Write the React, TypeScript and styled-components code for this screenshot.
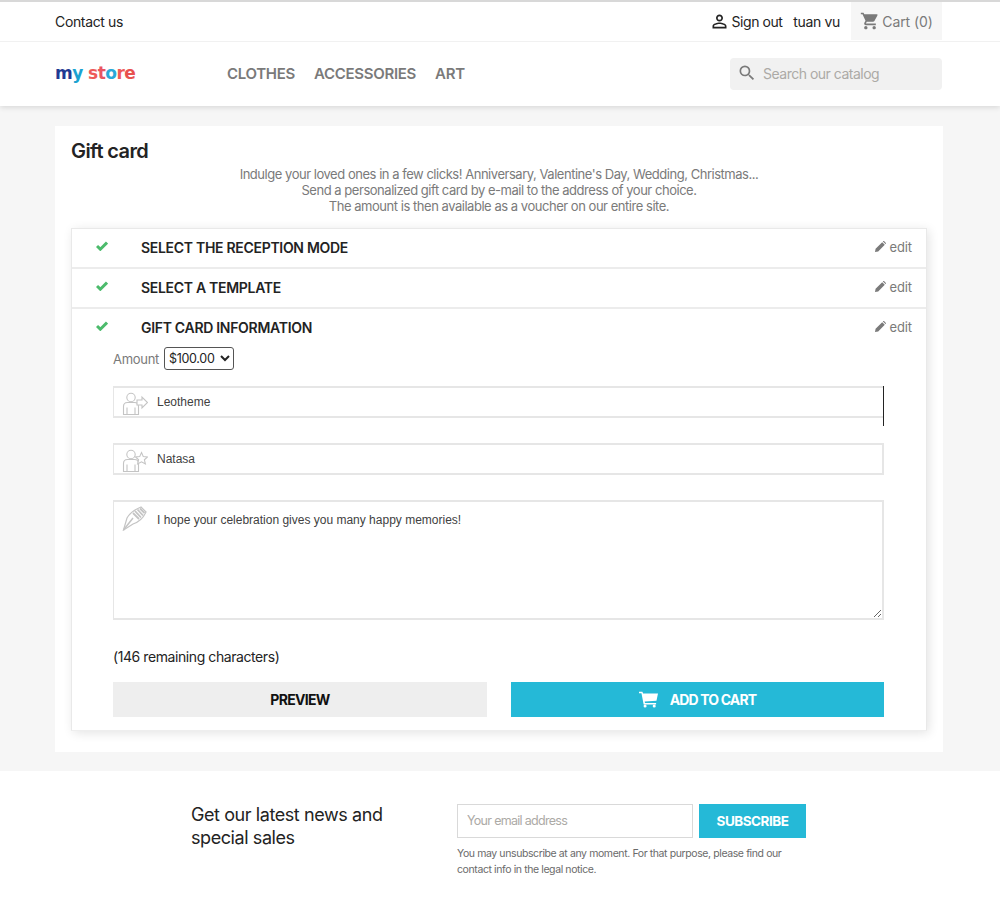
import React from "react";
import styled, { createGlobalStyle } from "styled-components";

const Global = createGlobalStyle`
  html, body { margin: 0; padding: 0; background: #fff; }
  * { box-sizing: border-box; }
  body { font-family: Inter, "Liberation Sans", sans-serif; color: #232323; }
`;
const Page = styled.div`width: 1000px; height: 900px; overflow: hidden; display: flex; flex-direction: column;`;
const Header = styled.header`
  height: 106px; background: #fff; border-top: 2px solid #d8d8d8;
  box-shadow: 0 2px 5px rgba(0,0,0,.11); position: relative; z-index: 1; flex: none;
`;
const TopBar = styled.div`
  height: 40px; border-bottom: 1px solid #f1f1f1; padding: 0 58px 0 55px;
  display: flex; align-items: center; justify-content: space-between;
`;
const TopLink = styled.span`font-size: 14px; letter-spacing: -.35px; color: #232323;`;
const TopRight = styled.div`display: flex; align-items: center; height: 100%;`;
const SignOut = styled(TopLink)`display: flex; align-items: center; gap: 2px; margin-right: 11px; letter-spacing: -.45px;`;
const Cart = styled.div`
  width: 91px; height: 38px; margin-left: 11px; background: #f6f6f6; color: #7a7a7a; font-size: 14px;
  display: flex; align-items: center; justify-content: center; gap: 2px; margin-bottom: 1px;
  letter-spacing: -.1px;
`;
const MainBar = styled.div`
  height: 64px; padding: 0 58px 2px 55px; display: flex; align-items: center;
`;
const Logo = styled.div`
  width: 172px; font: 800 17px "DejaVu Sans", sans-serif; letter-spacing: -.55px; line-height: 1; white-space: pre;
`;
const Ch = styled.span<{ $c: string }>`color: ${p => p.$c};`;
const Menu = styled.nav`display: flex; gap: 19px;`;
const MenuItem = styled.span`font-size: 15px; font-weight: 600; color: #7a7a7a; letter-spacing: -.3px;`;
const Search = styled.div`
  margin-left: auto; width: 212px; height: 32px; background: #f1f1f1; border-radius: 4px; margin-bottom: -2px;
  display: flex; align-items: center; gap: 6px; padding: 0 0 2px 7px; color: #acaaa6; font-size: 14px; letter-spacing: -.5px;
`;
const Main = styled.main`
  height: 665px; flex: none; background: #f6f6f6; padding: 20px 57px 0 55px;
`;
const Card = styled.section`
  background: #fff; height: 626px; padding: 14px 16px 0;
`;
const Title = styled.h1`
  font-size: 20px; line-height: 22px; font-weight: 600; margin: 0; color: #232323; letter-spacing: -.6px;
`;
const Intro = styled.p`
  margin: 4px 0 14px; text-align: center; font-size: 13px; line-height: 16px; color: #7a7a7a; letter-spacing: -.47px;
`;
const Steps = styled.div`box-shadow: 2px 2px 10px rgba(0,0,0,.11); border: 1px solid #e9e9e9; border-bottom-color: #eee;`;
const Step = styled.div`
  height: 38px; display: flex; align-items: center; padding: 0 14px 2px 24px; background: #fff;
  & + & { border-top: 2px solid #ececec; height: 40px; }
`;
const CheckBox = styled.span`width: 45px; display: flex; color: #4cbb6c; margin-top: -3px;`;
const StepTitle = styled.h2`
  margin: 0; font-size: 14px; font-weight: 600; color: #232323; letter-spacing: -.3px; flex: 1;
`;
const Edit = styled.span`
  display: flex; align-items: center; gap: 3px; color: #7a7a7a; font-size: 13px; letter-spacing: -.1px;
  svg { margin-top: -2px; }
`;
const Form = styled.div`padding: 0 42px 13px 41px; height: 383px;`;
const AmountRow = styled.div`
  display: flex; align-items: center; gap: 5px; height: 23px; margin-bottom: -1px; font-size: 13px; color: #7a7a7a; letter-spacing: -.3px;
`;
const Select = styled.select`
  width: 70px; height: 23px; border: 1px solid #555; border-radius: 3px; background: #fff;
  font: 12.5px Inter, sans-serif; letter-spacing: -.3px; color: #232323; padding: 0;
`;
const FieldRow = styled.div<{ $dark?: boolean }>`
  height: 40px; position: relative; margin-top: 17px;
  ${p => p.$dark ? "border-right: 1px solid #232323;" : ""}
`;
const FieldIcon = styled.span`position: absolute; left: 9px; top: 5px; display: flex; pointer-events: none;`;
const TextInput = styled.input`
  display: block; width: 100%; height: 32px; padding: 0 0 0 43px; background: #fff; outline: none;
  border: 2px solid #e6e6e6; border-width: 2px 2px 2px 1px;
  font: 12px "Liberation Sans", Arial, sans-serif; color: #414141;
`;
const OpenInput = styled(TextInput)`border-right: 0;`;
const AreaRow = styled.div`position: relative; height: 120px; margin-top: 17px;`;
const TextArea = styled.textarea`
  display: block; width: 100%; height: 120px; padding: 11px 0 0 43px; background: #fff; outline: none; resize: both;
  border: 2px solid #e6e6e6; border-width: 2px 2px 2px 1px;
  font: 12px "Liberation Sans", Arial, sans-serif; color: #414141;
`;
const Remaining = styled.div`
  margin-top: 27px; height: 20px; font-size: 14px; line-height: 20px; color: #232323; letter-spacing: -.42px; padding-left: 0;
`;
const Buttons = styled.div`display: grid; grid-template-columns: 374px 373px; column-gap: 24px; margin-top: 15px;`;
const Button = styled.button<{ $primary?: boolean }>`
  height: 35px; border: 0; padding: 0; display: flex; align-items: center; justify-content: center; gap: 12px;
  font: 700 14px Inter, sans-serif; letter-spacing: ${p => p.$primary ? "-.85px" : "-.7px"};
  background: ${p => p.$primary ? "#25b9d7" : "#eeeeee"};
  color: ${p => p.$primary ? "#fff" : "#111"};
`;
const Footer = styled.footer`
  flex: 1; background: #fff; padding: 33px 0 0 191px; display: flex;
`;
const Pitch = styled.div`
  width: 266px; font-size: 18px; line-height: 23px; color: #232323; letter-spacing: -.42px; margin-top: -1px;
`;
const Signup = styled.div`width: 350px;`;
const SignupRow = styled.div`display: flex; gap: 6px;`;
const Email = styled.input`
  width: 236px; height: 34px; border: 1px solid #d9d9d9; padding: 0 9px 2px; outline: none;
  font: 12.5px Inter, sans-serif; letter-spacing: -.7px;
  &::placeholder { color: #acaaa6; opacity: 1; }
`;
const Subscribe = styled.button`
  width: 107px; height: 34px; border: 0; background: #25b9d7; color: #fff; padding: 0 0 1px;
  font: 700 13.5px Inter, sans-serif; letter-spacing: -.5px;
`;
const Note = styled.p`
  margin: 8px 0 0; font-size: 10.5px; line-height: 16px; color: #6a6a6a; letter-spacing: -.4px; width: 345px;
`;

const Check = () => (
  <svg width="12" height="10" viewBox="0 0 12 10"><path d="M1 5 L4.3 8.2 L11 1.6" fill="none" stroke="currentColor" strokeWidth="3" /></svg>
);
const Pencil = () => (
  <svg width="11" height="11" viewBox="0 0 11 11" fill="currentColor"><path d="M0 11 L.6 7.8 L7.2 1.2 L9.8 3.8 L3.2 10.4 Z M7.9.5 L8.3.1 Q8.6-.1 9 .1 L10.9 2 Q11.1 2.4 10.9 2.7 L10.5 3.1 Z" /></svg>
);
const PersonOutline = () => (
  <svg width="21" height="21" viewBox="0 0 24 24" fill="#232323"><path d="M12 5.9a2.1 2.1 0 1 1 0 4.2 2.1 2.1 0 0 1 0-4.2m0 9c2.97 0 6.1 1.46 6.1 2.1v1.1H5.9V17c0-.64 3.13-2.1 6.1-2.1M12 4C9.79 4 8 5.79 8 8s1.79 4 4 4 4-1.79 4-4-1.79-4-4-4zm0 9c-2.67 0-8 1.34-8 4v3h16v-3c0-2.66-5.33-4-8-4z" /></svg>
);
const CartIcon = () => (
  <svg width="20" height="20" viewBox="0 0 24 24" fill="#7a7a7a"><path d="M7 18c-1.1 0-1.99.9-1.99 2S5.9 22 7 22s2-.9 2-2-.9-2-2-2zM1 2v2h2l3.6 7.59-1.35 2.45c-.16.28-.25.61-.25.96 0 1.1.9 2 2 2h12v-2H7.42c-.14 0-.25-.11-.25-.25l.03-.12.9-1.63h7.45c.75 0 1.41-.41 1.75-1.03l3.58-6.49A1 1 0 0 0 20.01 4H5.21l-.94-2H1zm16 16c-1.1 0-1.99.9-1.99 2s.89 2 1.99 2 2-.9 2-2-.9-2-2-2z" /></svg>
);
const SearchIcon = () => (
  <svg width="20" height="20" viewBox="0 0 24 24" fill="#7a7a7a"><path d="M15.5 14h-.79l-.28-.27A6.47 6.47 0 0 0 16 9.5 6.5 6.5 0 1 0 9.5 16c1.61 0 3.09-.59 4.23-1.57l.27.28v.79l5 4.99L20.49 19l-4.99-5zm-6 0C7.01 14 5 11.99 5 9.5S7.01 5 9.5 5 14 7.01 14 9.5 11.99 14 9.5 14z" /></svg>
);
const SolidCart = () => (
  <svg width="19" height="17" viewBox="0 0 20 17" fill="#fff"><path d="M0 .3h3.6l.7 2H20l-1.6 7.4-12.4 1 .3 1.4H18v1.6H4.9L2.6 2H0z" /><circle cx="6.4" cy="15.3" r="1.6" /><circle cx="16" cy="15.3" r="1.6" /></svg>
);
const Person = ({ children }: { children: React.ReactNode }) => (
  <svg width="26" height="25" viewBox="0 0 26 25" fill="none" stroke="#c4c4c4" strokeWidth="1.1">
    <circle cx="9" cy="6.5" r="4.2" />
    <path d="M1.5 23.5 V15.5 Q1.5 11.5 5.5 11.5 H12.5 Q16.5 11.5 16.5 15.5 V23.5 Z M5 23.5 V16.5 M13 23.5 V16.5" />
    {children}
  </svg>
);
const SendIcon = () => <Person><path d="M15 9 H20 V6 L25.5 11.5 L20 17 V14 H15 Z" fill="#fff" /></Person>;
const StarIcon = () => <Person><path d="M19.5 4.5 L21.3 8.6 L25.5 8.9 L22.4 11.8 L23.4 16 L19.5 13.8 L15.6 16 L16.6 11.8 L13.5 8.9 L17.7 8.6 Z" fill="#fff" /></Person>;
const QuillIcon = () => (
  <svg width="26" height="26" viewBox="0 0 26 26" fill="none" stroke="#c4c4c4" strokeWidth="1.2">
    <path d="M1.5 25 L5 13 Q9 6 19 2 L24 7 Q20 16 11 19 Z" />
    <path d="M1.5 25 L11 13" strokeWidth="1.5" />
    <path d="M11 8 L17 14 M13 6 L19 12.5 M15.5 4.5 L21 10.5 M18 3.5 L22.5 8" strokeWidth="1.8" />
  </svg>
);

const logo: [string, string][] = [["m","#1f3a93"],["y","#1aa3d1"],[" ","#000"],["s","#ee5a5a"],["t","#ea5560"],["o","#2aa9d8"],["r","#ee5a5a"],["e","#e8514f"]];

export default function App() {
  return (
    <Page>
      <Global />
      <Header>
        <TopBar>
          <TopLink>Contact us</TopLink>
          <TopRight>
            <SignOut><PersonOutline />Sign out</SignOut>
            <TopLink>tuan vu</TopLink>
            <Cart><CartIcon />Cart (0)</Cart>
          </TopRight>
        </TopBar>
        <MainBar>
          <Logo>{logo.map(([c, col], i) => <Ch key={i} $c={col}>{c}</Ch>)}</Logo>
          <Menu>
            <MenuItem>CLOTHES</MenuItem>
            <MenuItem>ACCESSORIES</MenuItem>
            <MenuItem>ART</MenuItem>
          </Menu>
          <Search><SearchIcon />Search our catalog</Search>
        </MainBar>
      </Header>
      <Main>
        <Card>
          <Title>Gift card</Title>
          <Intro>
            Indulge your loved ones in a few clicks! Anniversary, Valentine's Day, Wedding, Christmas...<br />
            Send a personalized gift card by e-mail to the address of your choice.<br />
            The amount is then available as a voucher on our entire site.
          </Intro>
          <Steps>
            <Step><CheckBox><Check /></CheckBox><StepTitle>SELECT THE RECEPTION MODE</StepTitle><Edit><Pencil />edit</Edit></Step>
            <Step><CheckBox><Check /></CheckBox><StepTitle>SELECT A TEMPLATE</StepTitle><Edit><Pencil />edit</Edit></Step>
            <Step><CheckBox><Check /></CheckBox><StepTitle>GIFT CARD INFORMATION</StepTitle><Edit><Pencil />edit</Edit></Step>
            <Form>
              <AmountRow>
                Amount
                <Select defaultValue="100"><option value="100">$100.00</option></Select>
              </AmountRow>
              <FieldRow $dark>
                <FieldIcon><SendIcon /></FieldIcon>
                <OpenInput defaultValue="Leotheme" readOnly />
              </FieldRow>
              <FieldRow>
                <FieldIcon><StarIcon /></FieldIcon>
                <TextInput defaultValue="Natasa" readOnly />
              </FieldRow>
              <AreaRow>
                <FieldIcon><QuillIcon /></FieldIcon>
                <TextArea defaultValue="I hope your celebration gives you many happy memories!" readOnly />
              </AreaRow>
              <Remaining>(146 remaining characters)</Remaining>
              <Buttons>
                <Button>PREVIEW</Button>
                <Button $primary><SolidCart />ADD TO CART</Button>
              </Buttons>
            </Form>
          </Steps>
        </Card>
      </Main>
      <Footer>
        <Pitch>Get our latest news and<br />special sales</Pitch>
        <Signup>
          <SignupRow>
            <Email placeholder="Your email address" />
            <Subscribe>SUBSCRIBE</Subscribe>
          </SignupRow>
          <Note>You may unsubscribe at any moment. For that purpose, please find our contact info in the legal notice.</Note>
        </Signup>
      </Footer>
    </Page>
  );
}
